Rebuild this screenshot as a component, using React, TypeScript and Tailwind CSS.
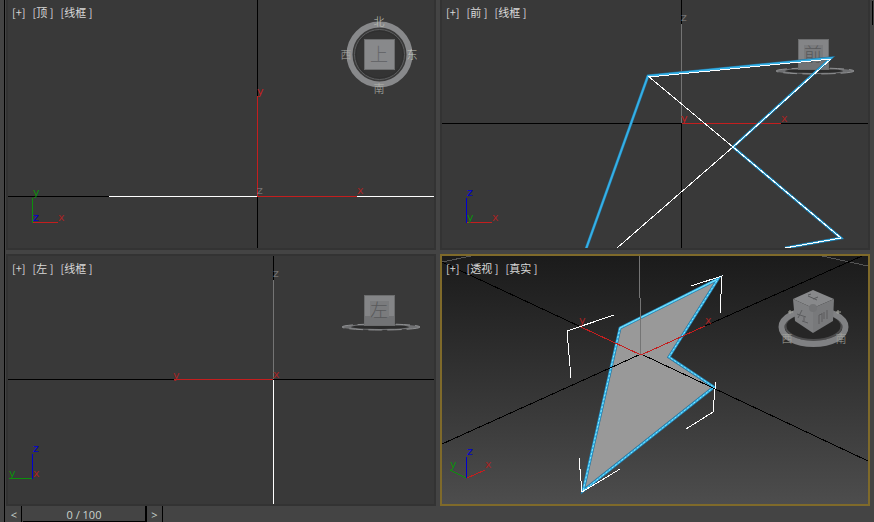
import type { ReactNode } from "react";

type LineProps = { p: string; c: string; w?: number };

/* Hard-edged polyline, as the viewport renderer draws its axes and wires. */
function Wire({ p, c, w = 1 }: LineProps) {
  return <polyline points={p} fill="none" stroke={c} strokeWidth={w} shapeRendering="crispEdges" />;
}

function AxisLabel({ x, y, c, children }: { x: number; y: number; c: string; children: string }) {
  return (
    <text x={x} y={y} fill={c} className="font-['DejaVu_Sans'] text-[11px]">
      {children}
    </text>
  );
}

/* Highlighted outline of a selected object. */
function Selection({ p, fill = "none", dashed = false }: { p: string; fill?: string; dashed?: boolean }) {
  return (
    <g>
      <polyline points={p} fill={fill} stroke="#246c93" strokeWidth="3" />
      <polyline points={p} fill="none" stroke="#35b0e6" strokeWidth="2" />
      {dashed && (
        <polyline points={p} fill="none" stroke="#8cefff" strokeWidth="1" strokeDasharray="2 2" />
      )}
    </g>
  );
}

function Glyph({ x, y, c, size, children }: { x: number; y: number; c: string; size: "sm" | "lg"; children: string }) {
  return (
    <text
      x={x}
      y={y}
      fill={c}
      textAnchor="middle"
      className={size === "sm" ? "font-['Noto_Sans_CJK_SC'] text-[11px] font-light" : "font-['Noto_Sans_CJK_SC'] text-[18px] font-light"}
    >
      {children}
    </text>
  );
}

/* View cube seen straight from one side, with the compass ring edge-on. */
function SideCube({ x, y, face }: { x: number; y: number; face: string }) {
  return (
    <g>
      <ellipse cx={x + 17} cy={y + 32} rx="39" ry="3" fill="#6f7072" />
      <ellipse cx={x + 17} cy={y + 32} rx="39" ry="3" fill="none" stroke="#8e8f91" strokeWidth="1" strokeDasharray="14 5" />
      <ellipse cx={x + 16} cy={y + 32} rx="29" ry="2" fill="#2b2b2b" />
      <rect x={x + 0.5} y={y + 0.5} width="30" height="30" fill="#848587" stroke="#6c6d6e" />
      <rect x={x + 1} y={y + 21} width="29" height="9" fill="#727375" />
      <rect x={x + 6} y={y + 6} width="19" height="16" fill="#7a7b7d" />
      <Glyph x={x + 15} y={y + 22} c="#58595b" size="lg">{face}</Glyph>
    </g>
  );
}

type ViewportProps = { name: string; shading: string; viewBox: string; frame: string; children: ReactNode };

function Viewport({ name, shading, viewBox, frame, children }: ViewportProps) {
  return (
    <section className={`relative min-h-0 min-w-0 overflow-hidden ${frame}`}>
      <svg viewBox={viewBox} preserveAspectRatio="xMidYMid slice" className="block h-full w-full">
        {children}
      </svg>
      <div className="absolute left-1 top-1 flex gap-[7px] font-['Noto_Sans_CJK_SC',sans-serif] text-[11px] leading-4 text-[#d8d8d8]">
        <button type="button">[+]</button>
        <button type="button">[{name} ]</button>
        <button type="button">[{shading} ]</button>
      </div>
    </section>
  );
}

const RED = "#c41e1e";
const LABEL_RED = "#a82424";
const BLUE = "#0000d0";
const GREEN = "#0c900c";
const GREY = "#747474";

function TopView() {
  return (
    <Viewport name="顶" shading="线框" viewBox="8 0 426 248" frame="border-x-2 border-b-2 border-[#333333] bg-[#393939]">
      <Wire p="257.5,0 257.5,248" c="#000" />
      <Wire p="8,196.5 109,196.5" c="#000" />
      <Wire p="109,196.5 434,196.5" c="#fff" />
      <Wire p="257.5,96 257.5,196.5 357,196.5" c={RED} />
      <AxisLabel x={257} y={95} c={RED}>y</AxisLabel>
      <AxisLabel x={257} y={194} c={GREY}>z</AxisLabel>
      <AxisLabel x={357} y={194} c={LABEL_RED}>x</AxisLabel>

      <Wire p="32.5,198 32.5,223" c={GREEN} />
      <Wire p="33,222.5 58,222.5" c={RED} />
      <AxisLabel x={33} y={196} c={GREEN}>y</AxisLabel>
      <AxisLabel x={33} y={221} c={BLUE}>z</AxisLabel>
      <AxisLabel x={58} y={221} c={LABEL_RED}>x</AxisLabel>

      <circle cx="379.5" cy="54.5" r="25" fill="#303030" stroke="#5d5e5f" strokeWidth="1" />
      <circle cx="379.5" cy="54.5" r="23" fill="#343434" />
      <circle cx="379.5" cy="54.5" r="30" fill="none" stroke="#88898b" strokeWidth="6" />
      <rect x="364.5" y="39.5" width="30" height="30" fill="#88898b" stroke="#6c6d6e" />
      <Glyph x={379} y={61} c="#66676a" size="lg">上</Glyph>
      <Glyph x={379} y={26} c="#c3c4bb" size="sm">北</Glyph>
      <Glyph x={379} y={93} c="#b4b5ac" size="sm">南</Glyph>
      <Glyph x={346} y={59} c="#a9aaa3" size="sm">西</Glyph>
      <Glyph x={412} y={59} c="#c3c4bb" size="sm">东</Glyph>
    </Viewport>
  );
}

function FrontView() {
  return (
    <Viewport name="前" shading="线框" viewBox="442 0 426 248" frame="border-x-2 border-b-2 border-[#333333] bg-[#393939]">
      <Wire p="681.5,0 681.5,248" c="#000" />
      <Wire p="442,123.5 868,123.5" c="#000" />
      <Wire p="681.5,24 681.5,123" c={GREY} />
      <Wire p="682,123.5 781,123.5" c={RED} />
      <SideCube x={798} y={39} face="前" />
      <Selection p="586,249 648,76 831,58 733,147 841,238 785,248" />
      <Wire p="649,77 831,59" c="#fff" />
      <Wire p="831,59 733,147" c="#fff" />
      <Wire p="733,147 841,238 785,248" c="#fff" />
      <Wire p="648,76 733,147 617,248" c="#fff" />
      <AxisLabel x={681} y={21} c={GREY}>z</AxisLabel>
      <AxisLabel x={681} y={122} c={RED}>y</AxisLabel>
      <AxisLabel x={781} y={122} c={LABEL_RED}>x</AxisLabel>

      <Wire p="466.5,198 466.5,223" c={BLUE} />
      <Wire p="467,222.5 492,222.5" c={RED} />
      <AxisLabel x={467} y={196} c={BLUE}>z</AxisLabel>
      <AxisLabel x={467} y={221} c={GREEN}>y</AxisLabel>
      <AxisLabel x={492} y={221} c={LABEL_RED}>x</AxisLabel>
    </Viewport>
  );
}

function LeftView() {
  return (
    <Viewport name="左" shading="线框" viewBox="8 256 426 248" frame="border-2 border-[#333333] bg-[#393939]">
      <Wire p="273.5,256 273.5,280" c="#000" />
      <Wire p="273.5,280 273.5,379" c={GREY} />
      <Wire p="8,379.5 434,379.5" c="#000" />
      <Wire p="174,379.5 273,379.5" c={RED} />
      <Wire p="273.5,380 273.5,504" c="#fff" />
      <AxisLabel x={273} y={277} c={GREY}>z</AxisLabel>
      <AxisLabel x={273} y={378} c={LABEL_RED}>x</AxisLabel>
      <AxisLabel x={173} y={379} c={LABEL_RED}>y</AxisLabel>
      <SideCube x={364} y={295} face="左" />

      <Wire p="32.5,454 32.5,479" c={BLUE} />
      <Wire p="9,478.5 32,478.5" c={GREEN} />
      <AxisLabel x={33} y={452} c={BLUE}>z</AxisLabel>
      <AxisLabel x={9} y={477} c={GREEN}>y</AxisLabel>
      <AxisLabel x={33} y={477} c={LABEL_RED}>x</AxisLabel>
    </Viewport>
  );
}

function PerspectiveView() {
  return (
    <Viewport
      name="透视"
      shading="真实"
      viewBox="442 256 426 248"
      frame="border-2 border-[#7f6a2a] bg-linear-to-b from-[#1b1b1b] to-[#4d4d4d]"
    >
      <Wire p="442,262 471,256" c="#555" />
      <Wire p="822,256 868,266" c="#555" />
      <Selection dashed p="620,328 718,279 669,357 714,387 583,491 620,328 718,279" fill="#999999" />
      <Wire p="442,262 581,327" c="#000" />
      <Wire p="442,444 641,354 868,461" c="#000" />
      <Wire p="705,326 862,256" c="#000" />
      <Wire p="639.5,256 639.5,298" c={GREY} />
      <Wire p="640.5,298 640.5,354" c={GREY} />
      <Wire p="581,327 641,355 705,326" c={RED} />
      <Wire p="691,286 722,276 720,313" c="#fff" />
      <Wire p="614,315 567,331 571,378" c="#fff" />
      <Wire p="715,382 715,389 713,412 686,429" c="#fff" />
      <Wire p="579,458 582,492 620,469" c="#fff" />
      <AxisLabel x={579} y={324} c={LABEL_RED}>y</AxisLabel>
      <AxisLabel x={705} y={324} c={LABEL_RED}>x</AxisLabel>

      <Wire p="466.5,457 466.5,478" c={BLUE} />
      <Wire p="467,478 485,470" c={RED} />
      <Wire p="466,478 450,470" c={GREEN} />
      <AxisLabel x={467} y={455} c={BLUE}>z</AxisLabel>
      <AxisLabel x={450} y={468} c={GREEN}>y</AxisLabel>
      <AxisLabel x={485} y={468} c={LABEL_RED}>x</AxisLabel>

      <ellipse cx="813.5" cy="326" rx="28" ry="14" fill="#262626" stroke="#4c4c4d" strokeWidth="2" />
      <ellipse cx="813.5" cy="327" rx="32" ry="17" fill="none" stroke="#808183" strokeWidth="6" />
      <polygon points="813,290 834,299 813,308 793,299" fill="#88898b" />
      <polygon points="793,299 813,308 813,333 795,321" fill="#7e7f81" />
      <polygon points="834,299 813,308 813,333 833,321" fill="#78797b" />
      <path d="M808 296l9 4M813 299l5-2M811 294l-3 1" stroke="#58595b" fill="none" />
      <circle cx="813" cy="308" r="4" fill="#737476" />
      <path d="M797 314l9 3M802 310l-4 8M804 317l0 4M802 321l6 2" stroke="#5c5d5f" fill="none" />
      <path d="M819 315v9M822 313v9M827 310v9M819 315l3-1M824 312v7" stroke="#5c5d5f" fill="none" />
      <path d="M788 312l5 0M790 310v4M836 312h5M838 310v4" stroke="#a4a59e" fill="none" />
      <Glyph x={787} y={343} c="#a4a59e" size="sm">西</Glyph>
      <Glyph x={841} y={343} c="#a4a59e" size="sm">南</Glyph>
    </Viewport>
  );
}

export default function App() {
  return (
    <div className="flex h-screen overflow-hidden bg-[#444444] font-['Liberation_Sans',sans-serif]">
      <div className="w-[5px] shrink-0 border-r border-black" />
      <main className="flex min-w-0 flex-1 flex-col">
        <div className="grid min-h-0 flex-1 grid-cols-2 grid-rows-[250fr_252fr] gap-1 pl-px">
          <TopView />
          <FrontView />
          <LeftView />
          <PerspectiveView />
        </div>
        <div className="flex h-4 shrink-0 pl-0.5 font-['Open_Sans','Liberation_Sans',sans-serif] text-[11px] leading-4 text-[#c9d3cd]">
          <button type="button" aria-label="Previous frame" className="flex w-[15px] items-center justify-center border-r border-black pt-0.5">
            &lt;
          </button>
          <button type="button" aria-label="Time slider" className="ml-px flex w-[124px] items-center justify-center border-b border-r-2 border-black pt-0.5">
            0 / 100
          </button>
          <button type="button" aria-label="Next frame" className="flex w-4 items-center justify-center border-r border-black pt-0.5">
            &gt;
          </button>
        </div>
      </main>
      <div className="flex w-1 shrink-0 justify-center pt-px">
        <div className="h-6 w-px bg-black" />
      </div>
    </div>
  );
}
